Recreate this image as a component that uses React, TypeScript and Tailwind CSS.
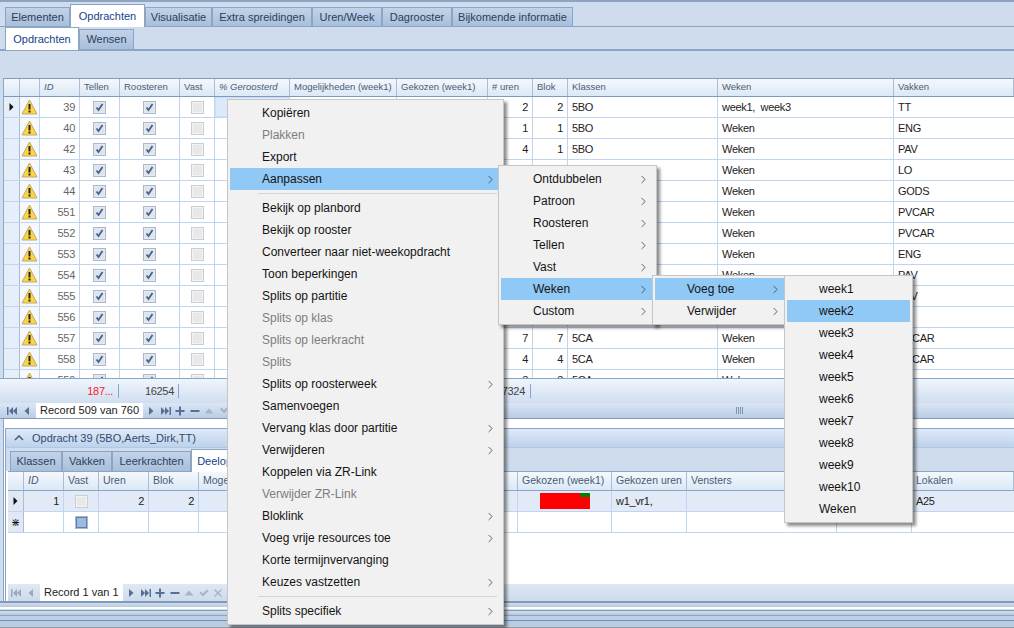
import { ChevronRight } from "lucide-react";

const FONT = "font-['Liberation_Sans',Arial,sans-serif]";

// main grid columns
const COLS = [16, 20, 40, 40, 60, 35, 75, 107, 91, 45, 35, 150, 176, 120];
const HEADS = ["", "", "ID", "Tellen", "Roosteren", "Vast", "% Geroosterd", "Mogelijkheden (week1)", "Gekozen (week1)", "# uren", "Blok", "Klassen", "Weken", "Vakken"];

const ROWS: [number, number, number, string, string, string][] = [
  [39, 2, 2, "5BO", "week1,\u00a0 week3", "TT"],
  [40, 1, 1, "5BO", "Weken", "ENG"],
  [42, 4, 1, "5BO", "Weken", "PAV"],
  [43, 2, 2, "5BO", "Weken", "LO"],
  [44, 1, 1, "5BO", "Weken", "GODS"],
  [551, 2, 2, "5CA", "Weken", "PVCAR"],
  [552, 2, 2, "5CA", "Weken", "PVCAR"],
  [553, 4, 4, "5CA", "Weken", "ENG"],
  [554, 3, 3, "5CA", "Weken", "PAV"],
  [555, 2, 2, "5CA", "Weken", "PAV"],
  [556, 2, 2, "5CA", "Weken", "TT"],
  [557, 7, 7, "5CA", "Weken", "PVCAR"],
  [558, 4, 4, "5CA", "Weken", "PVCAR"],
  [559, 3, 3, "5CA", "Weken", "LO"]
];

const DETAIL_COLS = [16, 40, 35, 50, 50, 319, 94, 75, 150, 75, 102];
const DETAIL_HEADS = ["", "ID", "Vast", "Uren", "Blok", "Mogelijkheden (week1)", "Gekozen (week1)", "Gekozen uren", "Vensters", "", "Lokalen"];

type MenuItem = { label: string; disabled?: boolean; arrow?: boolean; active?: boolean; sep?: boolean };

const MAIN_MENU: MenuItem[] = [
  { label: "Kopiëren" },
  { label: "Plakken", disabled: true },
  { label: "Export" },
  { label: "Aanpassen", arrow: true, active: true, sep: true },
  { label: "Bekijk op planbord" },
  { label: "Bekijk op rooster" },
  { label: "Converteer naar niet-weekopdracht" },
  { label: "Toon beperkingen" },
  { label: "Splits op partitie" },
  { label: "Splits op klas", disabled: true },
  { label: "Splits op leerkracht", disabled: true },
  { label: "Splits", disabled: true },
  { label: "Splits op roosterweek", arrow: true },
  { label: "Samenvoegen" },
  { label: "Vervang klas door partitie", arrow: true },
  { label: "Verwijderen", arrow: true },
  { label: "Koppelen via ZR-Link" },
  { label: "Verwijder ZR-Link", disabled: true },
  { label: "Bloklink", arrow: true },
  { label: "Voeg vrije resources toe", arrow: true },
  { label: "Korte termijnvervanging" },
  { label: "Keuzes vastzetten", arrow: true, sep: true },
  { label: "Splits specifiek", arrow: true }
];

const SUB_AANPASSEN: MenuItem[] = [
  { label: "Ontdubbelen", arrow: true },
  { label: "Patroon", arrow: true },
  { label: "Roosteren", arrow: true },
  { label: "Tellen", arrow: true },
  { label: "Vast", arrow: true },
  { label: "Weken", arrow: true, active: true },
  { label: "Custom", arrow: true }
];

const SUB_WEKEN: MenuItem[] = [
  { label: "Voeg toe", arrow: true, active: true },
  { label: "Verwijder", arrow: true }
];

const SUB_WEEKS: MenuItem[] = [
  { label: "week1" },
  { label: "week2", active: true },
  { label: "week3" },
  { label: "week4" },
  { label: "week5" },
  { label: "week6" },
  { label: "week7" },
  { label: "week8" },
  { label: "week9" },
  { label: "week10" },
  { label: "Weken" }
];

function Warning() {
  return (
    <svg width="17" height="16" viewBox="0 0 17 16">
      <path d="M8.5 1 L16 15 H1 Z" fill="#fdd53f" stroke="#b9ab7c" strokeWidth="1" strokeLinejoin="round" />
      <path d="M8.5 5v5.5" stroke="#222" strokeWidth="2" />
      <rect x="7.5" y="11.5" width="2" height="2" fill="#222" />
    </svg>
  );
}

function Check({ checked, blue, plain }: { checked?: boolean; blue?: boolean; plain?: boolean }) {
  return (
    <div className={`flex h-[13px] w-[13px] items-center justify-center border p-px ${plain ? "border-[#c9ced6] bg-[#f3f3f3]" : "border-[#a9b8cc] bg-[#e6e9ee]"}`}>
      <div className={`flex h-full w-full items-center justify-center ${blue ? "bg-[#9dbbdf] outline outline-[#5f7fa8]" : plain ? "bg-[#e8e8e8]" : "bg-[#dfe4ec]"}`}>
        {checked && (
          <svg width="9" height="9" viewBox="0 0 9 9">
            <path d="M1.5 4.5 L3.5 7 L7.5 1" fill="none" stroke="#44638f" strokeWidth="1.8" />
          </svg>
        )}
      </div>
    </div>
  );
}

function Pointer() {
  return (
    <svg width="5" height="8" viewBox="0 0 5 8">
      <path d="M0.5 0 L4.5 4 L0.5 8 Z" fill="#111" />
    </svg>
  );
}

function Menu({ items, className }: { items: MenuItem[]; className: string }) {
  return (
    <div className={`absolute z-20 flex flex-col border border-[#c6c6c6] bg-[#f1f1f1] p-[2px] shadow-[3px_3px_3px_rgba(0,0,0,0.45)] ${className}`}>
      {items.map((it) => (
        <div key={it.label}>
          <div
            className={`flex h-[22px] items-center justify-between pl-[32px] pr-[4px] text-[12px] ${it.active ? "bg-[#90c8f6]" : ""} ${it.disabled ? "text-[#7d7d7d]" : "text-[#141414]"}`}
          >
            <span>{it.label}</span>
            {it.arrow && <ChevronRight size={13} strokeWidth={1.5} className="text-[#444]" />}
          </div>
          {it.sep && <div className="mt-[3px] mb-[3px] ml-[28px] mr-[4px] h-px bg-[#d4d4d4]" />}
        </div>
      ))}
    </div>
  );
}

function NavGlyph({ d, className }: { d: string; className?: string }) {
  return (
    <div className={`flex w-[14.5px] shrink-0 justify-center ${className ?? ""}`}>
      <svg width="12" height="12" viewBox="0 0 12 12" fill="currentColor">
        <path d={d} />
      </svg>
    </div>
  );
}

const NAV_FIRST = "M1 2h1.5v8H1z M7 2v8L3 6z M11 2v8L7 6z";
const NAV_PREV = "M8 2v8L3.5 6z";
const NAV_NEXT = "M4 2v8l4.5-4z";
const NAV_LAST = "M1 2v8l4-4z M5 2v8l4-4z M9.5 2H11v8H9.5z";
const NAV_PLUS = "M5 1.5h2V5h3.5v2H7v3.5H5V7H1.5V5H5z";
const NAV_MINUS = "M1.5 5h9v2h-9z";
const NAV_UP = "M6 3.5l4.5 5h-9z";
const NAV_DOWN = "M2 4l1.5-1.5L6 5l2.5-2.5L10 4 6 8.5z";
const NAV_CHECK = "M1.5 6l1.5-1.5L5 6.5l4-4L10.5 4 5 9.5z";
const NAV_X = "M2 3l1-1 3 3 3-3 1 1-3 3 3 3-1 1-3-3-3 3-1-1 3-3z";

function Navigator({ record, detail }: { record: string; detail?: boolean }) {
  const start = detail ? "text-[#9aa9bc]" : "text-[#566f92]";
  const dark = "text-[#566f92]";
  const gray = "text-[#a9b4c2]";
  return (
    <div className={`flex h-full items-center ${detail ? "" : "pl-[4px]"}`}>
      <NavGlyph d={NAV_FIRST} className={`w-[15px] ${start}`} />
      <NavGlyph d={NAV_PREV} className={`w-[15px] ${start}`} />
      <div className={`ml-[2px] mr-[1px] flex h-full shrink-0 items-center whitespace-nowrap bg-white px-[4px] text-[11px] text-[#222] ${detail ? "w-[83px]" : "w-[107px]"}`}>
        {record}
      </div>
      <NavGlyph d={NAV_NEXT} className={dark} />
      <NavGlyph d={NAV_LAST} className={dark} />
      <NavGlyph d={NAV_PLUS} className={dark} />
      <NavGlyph d={NAV_MINUS} className={dark} />
      <NavGlyph d={NAV_UP} className={gray} />
      {!detail && <NavGlyph d={NAV_DOWN} className={gray} />}
      {detail && <NavGlyph d={NAV_CHECK} className={gray} />}
      {detail && <NavGlyph d={NAV_X} className={gray} />}
    </div>
  );
}

function Tab({ label, active, className }: { label: string; active?: boolean; className: string }) {
  return (
    <div
      className={`flex shrink-0 items-center justify-center whitespace-nowrap border border-b-0 border-[#8ba5c6] text-[11px] ${className} ${
        active
          ? "z-10 -mb-px h-[23px] bg-white text-[#15428b]"
          : "bg-gradient-to-b from-[#c2d3e8] to-[#a8bfdb] text-[#2c3e5c]"
      }`}
    >
      {label}
    </div>
  );
}

export default function App() {
  return (
    <div className={`relative flex h-[628px] w-[1014px] flex-col overflow-hidden border-t-[2px] border-[#8ea3bf] bg-[#cfdcee] ${FONT}`}>
      {/* top tabs */}
      <div className="flex h-[25px] shrink-0 items-end border-b border-[#8ba5c6] pl-[5px]">
        <Tab label="Elementen" className="h-[19px] w-[65px]" />
        <Tab label="Opdrachten" active className="w-[75px]" />
        <Tab label="Visualisatie" className="h-[19px] w-[67px]" />
        <Tab label="Extra spreidingen" className="h-[19px] w-[100px]" />
        <Tab label="Uren/Week" className="h-[19px] w-[70px]" />
        <Tab label="Dagrooster" className="h-[19px] w-[70px]" />
        <Tab label="Bijkomende informatie" className="h-[19px] w-[121px]" />
      </div>
      {/* sub tabs */}
      <div className="flex h-[24px] shrink-0 items-end border-b-2 border-[#8ba5c6] pl-[5px]">
        <Tab label="Opdrachten" active className="w-[74px]" />
        <Tab label="Wensen" className="h-[20px] w-[55px]" />
      </div>
      {/* toolbar */}
      <div className="h-[27px] shrink-0" />

      <div className="ml-[3px] flex h-[300px] shrink-0 flex-col overflow-hidden border-l border-[#8ba5c6] bg-white">
        <div className="flex h-[19px] shrink-0 border-y border-[#7f9abd] bg-gradient-to-b from-[#f4f8fd] to-[#dce8f6]">
          {HEADS.map((h, i) => (
            <div
              key={i}
              style={{ width: COLS[i] }}
              className={`flex shrink-0 items-center overflow-hidden whitespace-nowrap border-r border-[#a9bdd6] px-[4px] text-[9.5px] text-[#4a5b72] ${h === "ID" || h === "% Geroosterd" ? "italic" : ""}`}
            >
              {h}
            </div>
          ))}
        </div>
        {ROWS.map((r, i) => (
          <div key={r[0]} className="flex h-[21px] shrink-0 border-b border-[#c0d6f0] text-[11px] tracking-[-0.3px] text-[#222]">
            <div className="flex w-[16px] shrink-0 items-center justify-center border-r border-[#a9bdd6] bg-[#e6eef9]">
              {i === 0 && <Pointer />}
            </div>
            <div className="flex w-[20px] shrink-0 items-center justify-center border-r border-[#c0d6f0] bg-[#f6f8fc]">
              <Warning />
            </div>
            <div className="flex w-[40px] shrink-0 items-center justify-end border-r border-[#c0d6f0] pr-[4px] text-[#666]">{r[0]}</div>
            <div className="flex w-[40px] shrink-0 items-center justify-center border-r border-[#c0d6f0]"><Check checked /></div>
            <div className="flex w-[60px] shrink-0 items-center justify-center border-r border-[#c0d6f0]"><Check checked /></div>
            <div className="flex w-[35px] shrink-0 items-center justify-center border-r border-[#c0d6f0]"><Check plain /></div>
            <div className={`w-[75px] shrink-0 border-r border-[#c0d6f0] ${i === 0 ? "border border-dotted border-[#333] bg-[#dce9fa]" : ""}`} />
            <div className="w-[107px] shrink-0 border-r border-[#c0d6f0]" />
            <div className="w-[91px] shrink-0 border-r border-[#c0d6f0]" />
            <div className="flex w-[45px] shrink-0 items-center justify-end border-r border-[#c0d6f0] pr-[4px]">{r[1]}</div>
            <div className="flex w-[35px] shrink-0 items-center justify-end border-r border-[#c0d6f0] pr-[4px]">{r[2]}</div>
            <div className="flex w-[150px] shrink-0 items-center border-r border-[#c0d6f0] pl-[4px]">{r[3]}</div>
            <div className="flex w-[176px] shrink-0 items-center border-r border-[#c0d6f0] pl-[4px]">{r[4]}</div>
            <div className="flex w-[120px] shrink-0 items-center pl-[4px]">{r[5]}</div>
          </div>
        ))}
      </div>

      {/* summary row */}
      <div className="flex h-[25px] shrink-0 items-center border-t border-[#8ba5c6] bg-gradient-to-b from-[#f0f5fc] to-[#d0def0] text-[11px] tracking-[-0.3px] text-[#444]">
        <div className="flex h-[14px] w-[119px] shrink-0 items-center justify-end border-r border-[#8ba5c6] pr-[5px] text-[#ff2020]">187...</div>
        <div className="flex h-[14px] w-[60px] shrink-0 items-center justify-end border-r border-[#8ba5c6] pr-[4px]">16254</div>
        <div className="flex h-[14px] w-[352px] shrink-0 items-center justify-end border-r border-[#8ba5c6] pr-[5px]">7324</div>
      </div>
      {/* main navigator + splitter */}
      <div className="relative h-[16px] shrink-0 border-b border-[#7f9abd] bg-gradient-to-b from-[#dbe6f4] to-[#b9cde6]">
        <Navigator record="Record 509 van 760" />
        <div className="absolute left-[736px] top-[4px] flex gap-px">
          <div className="h-[7px] w-px bg-[#7f94b0]" />
          <div className="h-[7px] w-px bg-[#7f94b0]" />
          <div className="h-[7px] w-px bg-[#7f94b0]" />
          <div className="h-[7px] w-px bg-[#7f94b0]" />
        </div>
      </div>

      {/* detail area */}
      <div className="ml-[3px] flex h-[182px] shrink-0 flex-col border-l border-[#8ba5c6] bg-white pt-[9px] pl-[1px]">
        <div className="flex h-[173px] shrink-0 flex-col border-t border-l border-[#8ba5c6] bg-white">
          <div className="flex h-[19px] shrink-0 items-center border-b border-[#b4c8e0] bg-gradient-to-b from-[#dfeaf8] to-[#bdd2ec] pl-[8px] text-[11px] text-[#2f4a6e]">
            <svg width="10" height="6" viewBox="0 0 10 6" className="mr-[8px]">
              <path d="M1 5 L5 1 L9 5" fill="none" stroke="#4a6282" strokeWidth="1.6" />
            </svg>
            Opdracht 39 (5BO,Aerts_Dirk,TT)
          </div>
          <div className="flex h-[23px] shrink-0 items-end bg-[#cfdcee] pl-[4px]">
            <Tab label="Klassen" className="h-[20px] w-[52px]" />
            <Tab label="Vakken" className="h-[20px] w-[50px]" />
            <Tab label="Leerkrachten" className="h-[20px] w-[79px]" />
            <Tab label="Deelopdrachten" active className="w-[90px]" />
          </div>
          <div className="ml-[2px] flex h-[20px] shrink-0 border-y border-[#8ba5c6] bg-gradient-to-b from-[#f4f8fd] to-[#dce8f6]">
            {DETAIL_HEADS.map((h, i) => (
              <div
                key={i}
                style={{ width: DETAIL_COLS[i] }}
                className={`flex shrink-0 items-center whitespace-nowrap border-r border-[#a9bdd6] px-[4px] text-[10.5px] text-[#4a5b72] ${h === "ID" ? "italic" : ""}`}
              >
                {h}
              </div>
            ))}
          </div>
          <div className="ml-[2px] flex h-[21px] shrink-0 border-b border-[#c0d6f0] bg-[#e1eaf6] text-[11px] tracking-[-0.3px] text-[#222]">
            <div className="flex w-[16px] shrink-0 items-center justify-center border-r border-[#a9bdd6] bg-[#dfe8f4]"><Pointer /></div>
            <div className="flex w-[40px] shrink-0 items-center justify-end border-r border-[#c0d6f0] pr-[4px]">1</div>
            <div className="flex w-[35px] shrink-0 items-center justify-center border-r border-[#c0d6f0]"><Check plain /></div>
            <div className="flex w-[50px] shrink-0 items-center justify-end border-r border-[#c0d6f0] pr-[4px]">2</div>
            <div className="flex w-[50px] shrink-0 items-center justify-end border-r border-[#c0d6f0] pr-[4px]">2</div>
            <div className="w-[319px] shrink-0 border-r border-[#c0d6f0]" />
            <div className="flex w-[94px] shrink-0 items-center justify-center border-r border-[#c0d6f0]">
              <div className="flex h-[16px] w-[50px] justify-end bg-[#ff0000]">
                <div className="h-[4px] w-[10px] bg-[#008000]" />
              </div>
            </div>
            <div className="flex w-[75px] shrink-0 items-center border-r border-[#c0d6f0] pl-[4px]">w1_vr1,</div>
            <div className="w-[150px] shrink-0 border-r border-[#c0d6f0]" />
            <div className="w-[75px] shrink-0 border-r border-[#c0d6f0]" />
            <div className="flex w-[102px] shrink-0 items-center pl-[4px]">A25</div>
          </div>
          <div className="ml-[2px] flex h-[21px] shrink-0 border-b border-[#c0d6f0] text-[12px]">
            <div className="flex w-[16px] shrink-0 items-center justify-center border-r border-[#a9bdd6] bg-[#dfe8f4] text-[11px] leading-none text-[#111]">⋇</div>
            <div className="w-[40px] shrink-0 border-r border-[#c0d6f0]" />
            <div className="flex w-[35px] shrink-0 items-center justify-center border-r border-[#c0d6f0]"><Check blue /></div>
            <div className="w-[50px] shrink-0 border-r border-[#c0d6f0]" />
            <div className="w-[50px] shrink-0 border-r border-[#c0d6f0]" />
            <div className="w-[319px] shrink-0 border-r border-[#c0d6f0]" />
            <div className="w-[94px] shrink-0 border-r border-[#c0d6f0]" />
            <div className="w-[75px] shrink-0 border-r border-[#c0d6f0]" />
            <div className="w-[150px] shrink-0 border-r border-[#c0d6f0]" />
            <div className="w-[75px] shrink-0 border-r border-[#c0d6f0]" />
          </div>
          <div className="flex-1" />
          <div className="ml-[2px] h-[17px] shrink-0 bg-gradient-to-b from-[#dfe8f4] to-[#cddbec]">
            <Navigator record="Record 1 van 1" detail />
          </div>
        </div>
      </div>

      {/* bottom frame lines */}
      <div className="h-[2px] shrink-0 bg-[#7f9abd]" />
      <div className="h-[4px] shrink-0 bg-gradient-to-b from-[#d3deec] to-[#b7c8dd]" />
      <div className="h-[2px] shrink-0 bg-white" />
      <div className="h-[1px] shrink-0 bg-[#d4deeb]" />
      <div className="h-[1px] shrink-0 bg-[#7f9abd]" />
      <div className="h-[4px] shrink-0 bg-gradient-to-b from-[#d3deec] to-[#b7c8dd]" />
      <div className="h-px shrink-0 bg-[#8ba5c6]" />
      <div className="h-[4px] shrink-0 bg-[#c0d0e4]" />
      <div className="h-px shrink-0 bg-[#6f8fb0]" />
      <div className="h-[6px] shrink-0 bg-[#b8cce4]" />
      <div className="h-px shrink-0 bg-[#9a9a9a]" />

      {/* context menus */}
      <Menu items={MAIN_MENU} className="left-[227px] top-[97px] w-[277px]" />
      <Menu items={SUB_AANPASSEN} className="left-[498px] top-[163px] w-[159px]" />
      <Menu items={SUB_WEKEN} className="left-[652px] top-[273px] w-[137px]" />
      <Menu items={SUB_WEEKS} className="left-[784px] top-[273px] w-[129px]" />
    </div>
  );
}
